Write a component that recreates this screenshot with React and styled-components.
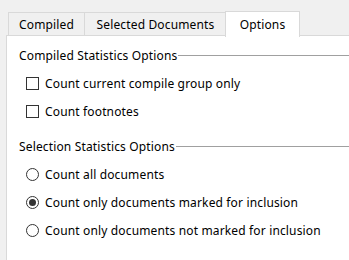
import React, { useState } from 'react';
import styled, { createGlobalStyle } from 'styled-components';

const GlobalStyle = createGlobalStyle`
  html, body {
    margin: 0;
    background: #f0f0f0;
  }
  body {
    font-family: 'Noto Sans', 'Liberation Sans', sans-serif;
    font-size: 12px;
    letter-spacing: 0.15px;
    color: #000;
  }
`;

const Window = styled.div`
  width: 349px;
  height: 260px;
  overflow: hidden;
  padding-top: 10px;
  box-sizing: border-box;
`;

const TabStrip = styled.div`
  display: flex;
  align-items: flex-end;
  padding-left: 8px;
  height: 26px;
  position: relative;
  z-index: 1;
`;

const Tab = styled.div`
  box-sizing: border-box;
  width: ${(p) => p.$w}px;
  height: ${(p) => (p.$active ? 26 : 24)}px;
  margin: 0 ${(p) => (p.$active ? -2 : 0)}px ${(p) => (p.$active ? -1 : 0)}px;
  display: flex;
  align-items: center;
  justify-content: center;
  padding-top: 1px;
  padding-bottom: ${(p) => (p.$active ? 2 : 0)}px;
  background: ${(p) => (p.$active ? '#fff' : '#f0f0f0')};
  border: 1px solid #d9d9d9;
  border-bottom: ${(p) => (p.$active ? 'none' : '1px solid #d9d9d9')};
  border-left: ${(p) => (p.$first || p.$active ? '1px solid #d9d9d9' : 'none')};
  cursor: default;
  position: relative;
  z-index: ${(p) => (p.$active ? 2 : 1)};
  white-space: nowrap;
`;

const Panel = styled.div`
  margin-left: 6px;
  margin-top: -1px;
  background: #fff;
  border-top: 1px solid #d9d9d9;
  border-left: 1px solid #d9d9d9;
  height: 240px;
  padding-top: 5px;
`;

const Group = styled.div`
  padding-left: 12px;
  & + & {
    margin-top: 7px;
  }
`;

const GroupHeader = styled.div`
  display: flex;
  align-items: center;
  height: 28px;
`;

const HeaderLine = styled.div`
  flex: 1;
  height: 1px;
  margin-left: 1px;
  background: #a0a0a0;
`;

const Option = styled.label`
  display: flex;
  align-items: center;
  height: 28px;
  padding-left: 7px;
  gap: 6px;
  cursor: default;
`;

const Box = styled.span`
  box-sizing: border-box;
  width: 13px;
  height: 13px;
  border: 1px solid #333;
  background: #fff;
  display: flex;
  align-items: center;
  justify-content: center;
  flex-shrink: 0;
`;

const Circle = styled(Box)`
  border-radius: 50%;
`;

const Dot = styled.span`
  width: 7px;
  height: 7px;
  border-radius: 50%;
  background: #333;
`;

const tabs = [
  { label: 'Compiled', w: 77 },
  { label: 'Selected Documents', w: 142 },
  { label: 'Options', w: 75 },
];

const radios = [
  'Count all documents',
  'Count only documents marked for inclusion',
  'Count only documents not marked for inclusion',
];

export default function App() {
  const [checks, setChecks] = useState([false, false]);
  const [selected, setSelected] = useState(1);

  const toggle = (i) => setChecks(checks.map((c, j) => (j === i ? !c : c)));

  return (
    <Window>
      <GlobalStyle />
      <TabStrip>
        {tabs.map((t, i) => (
          <Tab key={t.label} $w={t.w} $first={i === 0} $active={i === 2}>
            {t.label}
          </Tab>
        ))}
      </TabStrip>
      <Panel>
        <Group>
          <GroupHeader>
            Compiled Statistics Options
            <HeaderLine />
          </GroupHeader>
          {['Count current compile group only', 'Count footnotes'].map((label, i) => (
            <Option key={label} onClick={() => toggle(i)}>
              <Box>{checks[i] && '✓'}</Box>
              {label}
            </Option>
          ))}
        </Group>
        <Group>
          <GroupHeader>
            Selection Statistics Options
            <HeaderLine />
          </GroupHeader>
          {radios.map((label, i) => (
            <Option key={label} onClick={() => setSelected(i)}>
              <Circle>{selected === i && <Dot />}</Circle>
              {label}
            </Option>
          ))}
        </Group>
      </Panel>
    </Window>
  );
}
